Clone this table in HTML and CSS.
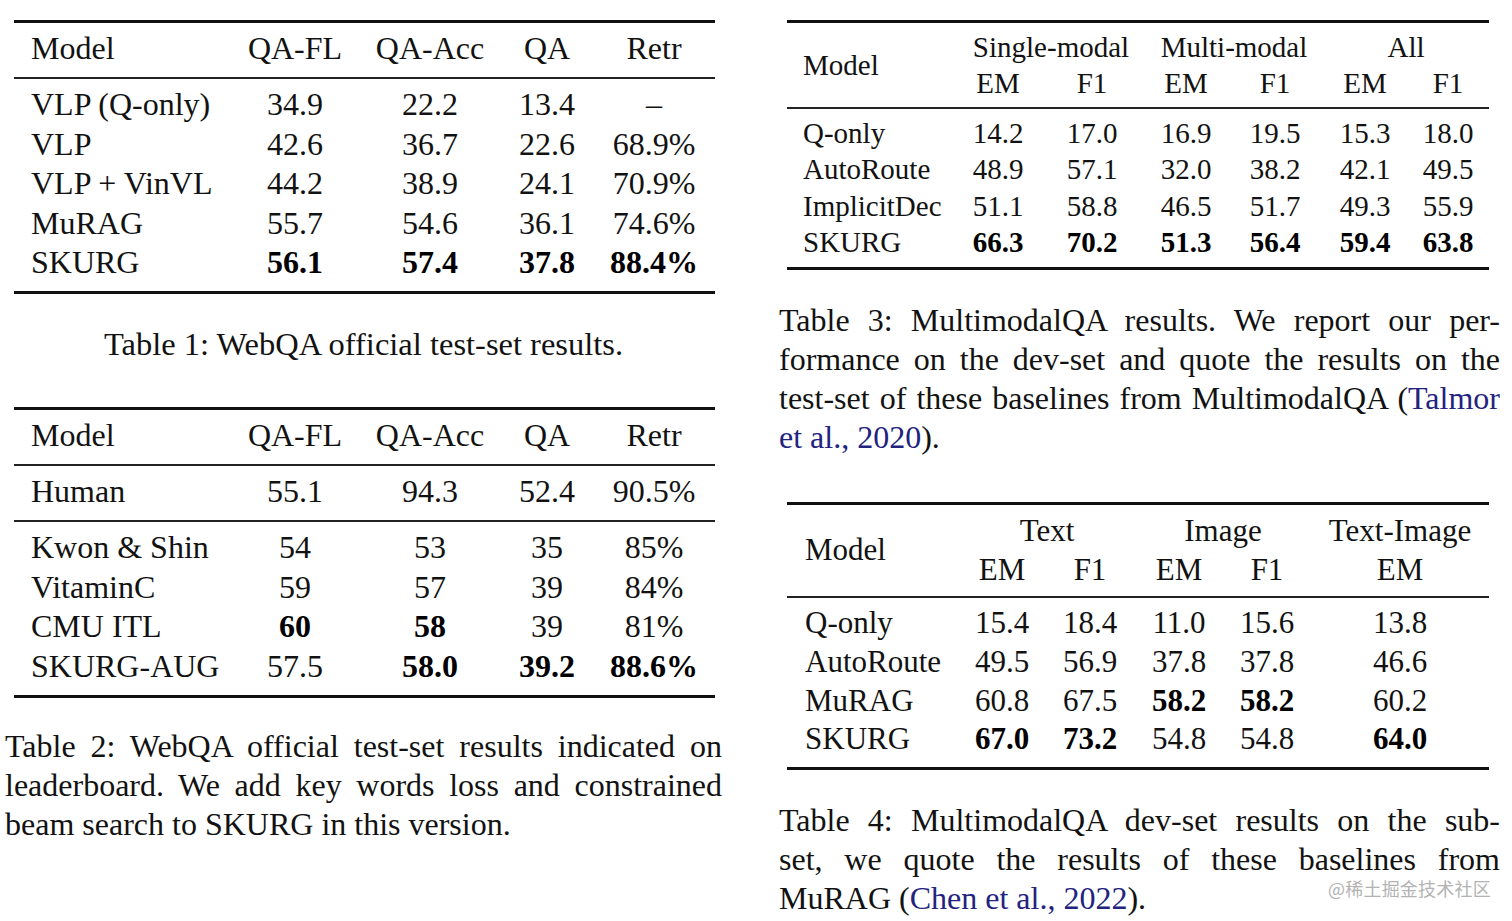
FILE: index.html
```html
<!DOCTYPE html>
<html lang="en">
<head>
<meta charset="utf-8">
<title>SKURG result tables</title>
<link rel="stylesheet" href="styles.css">
</head>
<body>
<main class="page">
  <section class="col col-left">
    <div class="tbl tbl-webqa">
      <div class="sec head">
        <div class="row w5"><span class="c-model">Model</span><span>QA-FL</span><span>QA-Acc</span><span>QA</span><span>Retr</span></div>
      </div>
      <div class="sec body">
        <div class="row w5"><span class="c-model">VLP (Q-only)</span><span>34.9</span><span>22.2</span><span>13.4</span><span>–</span></div>
        <div class="row w5"><span class="c-model">VLP</span><span>42.6</span><span>36.7</span><span>22.6</span><span>68.9%</span></div>
        <div class="row w5"><span class="c-model">VLP + VinVL</span><span>44.2</span><span>38.9</span><span>24.1</span><span>70.9%</span></div>
        <div class="row w5"><span class="c-model">MuRAG</span><span>55.7</span><span>54.6</span><span>36.1</span><span>74.6%</span></div>
        <div class="row w5"><span class="c-model">SKURG</span><span class="b">56.1</span><span class="b">57.4</span><span class="b">37.8</span><span class="b">88.4%</span></div>
      </div>
    </div>
    <p class="caption cap-center cap-1">Table 1: WebQA official test-set results.</p>

    <div class="tbl tbl-webqa tbl-2">
      <div class="sec head">
        <div class="row w5"><span class="c-model">Model</span><span>QA-FL</span><span>QA-Acc</span><span>QA</span><span>Retr</span></div>
      </div>
      <div class="sec body">
        <div class="row w5"><span class="c-model">Human</span><span>55.1</span><span>94.3</span><span>52.4</span><span>90.5%</span></div>
      </div>
      <div class="sec body">
        <div class="row w5"><span class="c-model">Kwon &amp; Shin</span><span>54</span><span>53</span><span>35</span><span>85%</span></div>
        <div class="row w5"><span class="c-model">VitaminC</span><span>59</span><span>57</span><span>39</span><span>84%</span></div>
        <div class="row w5"><span class="c-model">CMU ITL</span><span class="b">60</span><span class="b">58</span><span>39</span><span>81%</span></div>
        <div class="row w5"><span class="c-model">SKURG-AUG</span><span>57.5</span><span class="b">58.0</span><span class="b">39.2</span><span class="b">88.6%</span></div>
      </div>
    </div>
    <p class="caption cap-2">
      <span class="line">Table 2:  WebQA official test-set results indicated on</span>
      <span class="line">leaderboard.  We add key words loss and constrained</span>
      <span class="line last">beam search to SKURG in this version.</span>
    </p>
  </section>

  <section class="col col-right">
    <div class="tbl tbl-mmqa">
      <div class="sec head head-mmqa">
        <span class="c-model h-model">Model</span>
        <span class="grp">Single-modal</span>
        <span class="grp">Multi-modal</span>
        <span class="grp">All</span>
        <span>EM</span><span>F1</span><span>EM</span><span>F1</span><span>EM</span><span>F1</span>
      </div>
      <div class="sec body">
        <div class="row w7"><span class="c-model">Q-only</span><span>14.2</span><span>17.0</span><span>16.9</span><span>19.5</span><span>15.3</span><span>18.0</span></div>
        <div class="row w7"><span class="c-model">AutoRoute</span><span>48.9</span><span>57.1</span><span>32.0</span><span>38.2</span><span>42.1</span><span>49.5</span></div>
        <div class="row w7"><span class="c-model">ImplicitDec</span><span>51.1</span><span>58.8</span><span>46.5</span><span>51.7</span><span>49.3</span><span>55.9</span></div>
        <div class="row w7"><span class="c-model">SKURG</span><span class="b">66.3</span><span class="b">70.2</span><span class="b">51.3</span><span class="b">56.4</span><span class="b">59.4</span><span class="b">63.8</span></div>
      </div>
    </div>
    <p class="caption cap-3">
      <span class="line">Table 3:  MultimodalQA results.  We report our per-</span>
      <span class="line">formance on the dev-set and quote the results on the</span>
      <span class="line">test-set of these baselines from MultimodalQA (<a class="cite" href="#">Talmor</a></span>
      <span class="line last"><a class="cite" href="#">et al., 2020</a>).</span>
    </p>

    <div class="tbl tbl-sub">
      <div class="sec head head-sub">
        <span class="c-model h-model">Model</span>
        <span class="grp">Text</span>
        <span class="grp">Image</span>
        <span class="grp-one">Text-Image</span>
        <span>EM</span><span>F1</span><span>EM</span><span>F1</span><span>EM</span>
      </div>
      <div class="sec body">
        <div class="row w6"><span class="c-model">Q-only</span><span>15.4</span><span>18.4</span><span>11.0</span><span>15.6</span><span>13.8</span></div>
        <div class="row w6"><span class="c-model">AutoRoute</span><span>49.5</span><span>56.9</span><span>37.8</span><span>37.8</span><span>46.6</span></div>
        <div class="row w6"><span class="c-model">MuRAG</span><span>60.8</span><span>67.5</span><span class="b">58.2</span><span class="b">58.2</span><span>60.2</span></div>
        <div class="row w6"><span class="c-model">SKURG</span><span class="b">67.0</span><span class="b">73.2</span><span>54.8</span><span>54.8</span><span class="b">64.0</span></div>
      </div>
    </div>
    <p class="caption cap-4">
      <span class="line">Table 4:  MultimodalQA dev-set results on the sub-</span>
      <span class="line">set, we quote the results of these baselines from</span>
      <span class="line last">MuRAG (<a class="cite" href="#">Chen et al., 2022</a>).</span>
    </p>
  </section>
  <div class="watermark">@稀土掘金技术社区</div>
</main>
</body>
</html>
```

FILE: styles.css
```css
html, body {
  margin: 0;
  padding: 0;
  background: #ffffff;
}

body {
  width: 1512px;
  height: 921px;
  overflow: hidden;
  font-family: "Liberation Serif", "Times New Roman", serif;
  color: #121212;
}

.page {
  position: relative;
  display: flex;
  gap: 57px;
  padding-left: 5px;
  height: 921px;
}

.col {
  display: flex;
  flex-direction: column;
}

.col-left {
  width: 717px;
  padding-top: 20px;
}

.col-right {
  width: 721px;
  padding-top: 20px;
}

/* ---------- tables ---------- */
.tbl {
  border-top: 3px solid #111;
  border-bottom: 3px solid #111;
}

.sec + .sec {
  border-top: 2px solid #222;
}

.row {
  display: grid;
  align-items: center;
}

.row > span,
.head > span {
  text-align: center;
  white-space: nowrap;
}

.row > .c-model,
.head > .c-model {
  text-align: left;
}

.b {
  font-weight: bold;
  color: #000;
}

/* Table 1 & 2 */
.tbl-webqa {
  width: 701px;
  margin-left: 9px;
  font-size: 32px;
}

.tbl-webqa .sec {
  padding: 6px 0 8.5px;
}

.tbl-webqa .row {
  height: 39.5px;
  line-height: 39.5px;
}

.w5 {
  grid-template-columns: 217px 128px 142px 92px 122px;
}

.tbl-webqa .c-model {
  padding-left: 17px;
}

.tbl-2 {
  margin-top: 43.5px;
}

/* Table 3 */
.tbl-mmqa {
  width: 702px;
  margin-left: 8px;
  font-size: 29px;
}

.head-mmqa {
  display: grid;
  grid-template-columns: 170px 82px 106px 82px 96px 84px 82px;
  grid-auto-rows: 36px;
  line-height: 36px;
  padding: 6px 0 6px;
  align-items: center;
}

.head-mmqa .h-model {
  grid-row: 1 / span 2;
  padding-left: 16px;
}

.grp {
  grid-column: span 2;
}

.tbl-mmqa .body {
  padding: 6px 0 7px;
}

.tbl-mmqa .row {
  height: 36.25px;
  line-height: 36.25px;
}

.w7 {
  grid-template-columns: 170px 82px 106px 82px 96px 84px 82px;
}

.tbl-mmqa .row .c-model {
  padding-left: 16px;
}

/* Table 4 */
.tbl-sub {
  width: 702px;
  margin-left: 8px;
  margin-top: 45.5px;
  font-size: 31px;
}

.head-sub {
  display: grid;
  grid-template-columns: 172px 86px 90px 88px 88px 178px;
  grid-auto-rows: 39px;
  line-height: 39px;
  padding: 5.5px 0 7.5px;
  align-items: center;
}

.head-sub .h-model {
  grid-row: 1 / span 2;
  padding-left: 18px;
}

.grp-one {
  grid-column: span 1;
}

.tbl-sub .body {
  padding: 6px 0 8px;
}

.tbl-sub .row {
  height: 38.75px;
  line-height: 38.75px;
}

.w6 {
  grid-template-columns: 172px 86px 90px 88px 88px 178px;
}

.tbl-sub .row .c-model {
  padding-left: 18px;
}

/* ---------- captions ---------- */
.caption {
  margin: 30.5px 0 0;
  font-size: 32px;
  line-height: 39px;
  color: #121212;
}

.cap-center {
  text-align: center;
}

.cap-1 {
  font-size: 32.5px;
}

.cap-2 {
  margin-top: 29px;
}

.caption .line {
  display: block;
  white-space: normal;
  text-align: justify;
  text-align-last: justify;
}

.caption .line.last {
  text-align: left;
  text-align-last: left;
}

.cite {
  color: #23237f;
  text-decoration: none;
}

/* ---------- watermark overlay ---------- */
.watermark {
  position: absolute;
  left: 1328px;
  top: 879px;
  font-family: "Noto Sans CJK SC", "Noto Sans", sans-serif;
  font-size: 18px;
  line-height: 18px;
  color: #b3b3b3;
  letter-spacing: 0.2px;
  text-shadow: 0 0 1px rgba(255, 255, 255, 0.8);
}
```
